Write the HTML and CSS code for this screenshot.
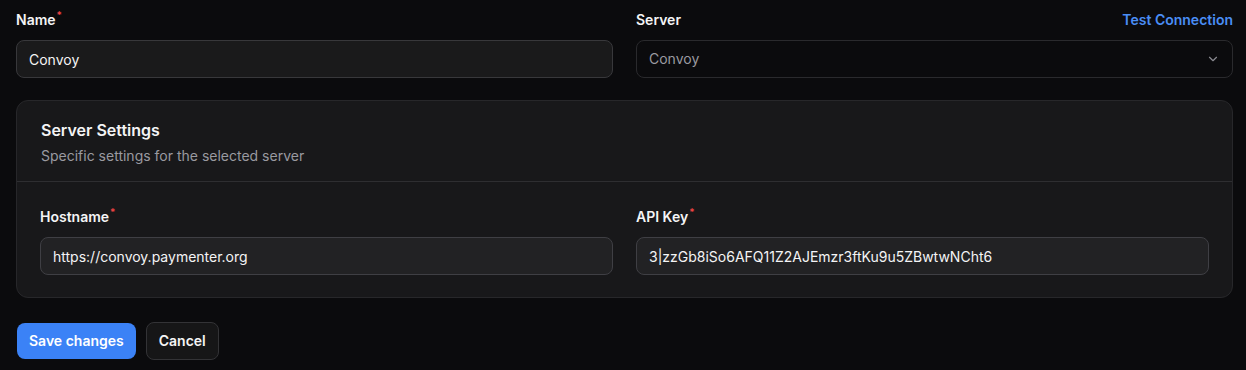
FILE: index.html
```html
<!DOCTYPE html>
<html lang="en">
<head>
    <meta charset="UTF-8">
    <meta name="viewport" content="width=device-width, initial-scale=1.0">
    <title>Edit Server - Convoy</title>
    <link rel="stylesheet" href="styles.css">
</head>
<body>
    <form class="server-form">
        <div class="field-row">
            <div class="field">
                <div class="field-head">
                    <label class="label" for="name">Name<span class="required">*</span></label>
                </div>
                <input class="input" id="name" type="text" value="Convoy">
            </div>
            <div class="field">
                <div class="field-head">
                    <label class="label" for="server">Server</label>
                    <a class="test-link" href="#">Test Connection</a>
                </div>
                <div class="select">
                    <span class="select-value">Convoy</span>
                    <svg class="chevron" width="14" height="14" viewBox="0 0 24 24" fill="none" stroke="currentColor" stroke-width="2" stroke-linecap="round" stroke-linejoin="round"><path d="m6 9 6 6 6-6"/></svg>
                </div>
            </div>
        </div>

        <section class="card">
            <div class="card-header">
                <h3 class="card-title">Server Settings</h3>
                <p class="card-desc">Specific settings for the selected server</p>
            </div>
            <div class="card-body field-row">
                <div class="field">
                    <div class="field-head">
                        <label class="label" for="hostname">Hostname<span class="required">*</span></label>
                    </div>
                    <input class="input input-card" id="hostname" type="text" value="https://convoy.paymenter.org">
                </div>
                <div class="field">
                    <div class="field-head">
                        <label class="label" for="apikey">API Key<span class="required">*</span></label>
                    </div>
                    <input class="input input-card" id="apikey" type="text" value="3|zzGb8iSo6AFQ11Z2AJEmzr3ftKu9u5ZBwtwNCht6">
                </div>
            </div>
        </section>

        <div class="actions">
            <button class="btn btn-primary" type="button">Save changes</button>
            <button class="btn btn-outline" type="button">Cancel</button>
        </div>
    </form>
</body>
</html>
```

FILE: styles.css
```css
body {
    margin: 0;
    padding: 0;
    background: #0b0b0d;
    color: #f4f4f5;
    font-family: 'Inter', 'Liberation Sans', sans-serif;
    font-size: 14px;
    line-height: 20px;
}
.server-form {
    padding: 10px 13px 0 16px;
}
.field-row {
    display: grid;
    grid-template-columns: 1fr 1fr;
    column-gap: 23px;
}
.field {
    display: flex;
    flex-direction: column;
    gap: 10px;
}
.field-head {
    display: flex;
    justify-content: space-between;
    align-items: center;
    height: 20px;
}
.label {
    font-weight: 600;
    color: #f4f4f5;
}
.required {
    color: #ef4444;
    font-size: 10px;
    vertical-align: top;
    line-height: 10px;
    margin-left: 1px;
}
.test-link {
    color: #4a8ef5;
    font-weight: 600;
    text-decoration: none;
}
.input {
    box-sizing: border-box;
    height: 38px;
    width: 100%;
    padding: 0 12px;
    background: #1a1a1b;
    border: 1px solid #38383b;
    border-radius: 8px;
    color: #f4f4f5;
    font: inherit;
    outline: none;
}
.select {
    box-sizing: border-box;
    height: 38px;
    display: flex;
    align-items: center;
    justify-content: space-between;
    padding: 0 12px;
    background: #0b0b0d;
    border: 1px solid #2a2a2d;
    border-radius: 8px;
    color: #9a9aa0;
}
.chevron {
    color: #8a8a90;
}
.card {
    margin-top: 22px;
    background: #18181a;
    border: 1px solid #27272a;
    border-radius: 12px;
}
.card-header {
    padding: 17px 24px 15px;
    border-bottom: 1px solid #2e2e31;
}
.card-title {
    margin: 0;
    font-size: 16px;
    line-height: 24px;
    font-weight: 600;
}
.card-desc {
    margin: 4px 0 0;
    color: #9a9aa0;
}
.card-body {
    padding: 25px 23px 22px 23px;
}
.input-card {
    background: #222224;
    border-color: #3f3f44;
}
.actions {
    display: flex;
    align-items: center;
    gap: 10px;
    margin-top: 24px;
    padding-left: 1px;
}
.btn {
    box-sizing: border-box;
    font: inherit;
    font-weight: 600;
    border-radius: 8px;
    cursor: pointer;
}
.btn-primary {
    height: 36px;
    padding: 0 12px;
    background: #3b82f6;
    color: #fff;
    border: none;
}
.btn-outline {
    height: 38px;
    padding: 0 12px;
    background: #161617;
    color: #f4f4f5;
    border: 1px solid #333336;
}
```
